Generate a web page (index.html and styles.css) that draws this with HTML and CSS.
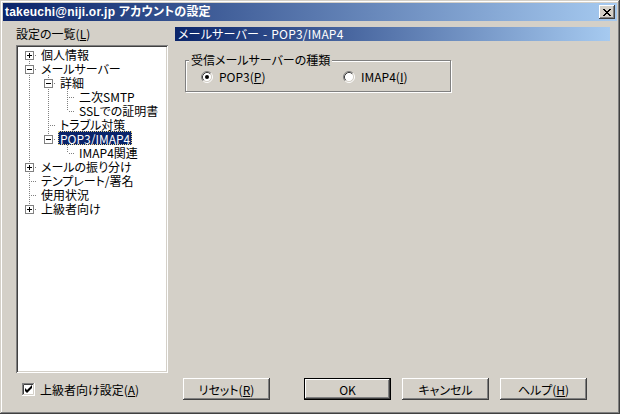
FILE: index.html
```html
<!DOCTYPE html>
<html lang="ja">
<head>
    <meta charset="UTF-8">
    <link rel="stylesheet" href="styles.css">
    <title>アカウントの設定</title>
</head>
<body>
<div class="window">
    <div class="titlebar">
        <span class="title">takeuchi@niji.or.jp アカウントの設定</span>
        <button class="close">
            <svg width="8" height="7" viewBox="0 0 8 7"><path d="M0 0h2v1h1v1h2V1h1V0h2v1H7v1H6v1H5v1h1v1h1v1h1v1H6V6H5V5H3v1H2v1H0V6h1V5h1V4h1V3H2V2H1V1H0z" fill="#000"/></svg>
        </button>
    </div>

    <div class="content">
        <div class="left">
            <div class="list-label">設定の一覧(<u>L</u>)</div>
            <div class="tree">
                <div class="row"><span class="joint first"><i class="exp plus"></i></span><span class="text">個人情報</span></div>
                <div class="row"><span class="joint"><i class="exp"></i></span><span class="text">メールサーバー</span></div>
                <div class="row"><span class="guide line"></span><span class="joint"><i class="exp"></i></span><span class="text">詳細</span></div>
                <div class="row"><span class="guide line"></span><span class="guide line"></span><span class="joint"></span><span class="text">二次SMTP</span></div>
                <div class="row"><span class="guide line"></span><span class="guide line"></span><span class="joint last"></span><span class="text">SSLでの証明書</span></div>
                <div class="row"><span class="guide line"></span><span class="joint"></span><span class="text">トラブル対策</span></div>
                <div class="row"><span class="guide line"></span><span class="joint last"><i class="exp"></i></span><span class="text sel">POP3/IMAP4</span></div>
                <div class="row"><span class="guide line"></span><span class="guide"></span><span class="joint last"></span><span class="text">IMAP4関連</span></div>
                <div class="row"><span class="joint"><i class="exp plus"></i></span><span class="text">メールの振り分け</span></div>
                <div class="row"><span class="joint"></span><span class="text">テンプレート/署名</span></div>
                <div class="row"><span class="joint"></span><span class="text">使用状況</span></div>
                <div class="row"><span class="joint last"><i class="exp plus"></i></span><span class="text">上級者向け</span></div>
            </div>
        </div>

        <div class="right">
            <div class="page-title">メールサーバー - POP3/IMAP4</div>
            <fieldset class="group">
                <legend>受信メールサーバーの種類</legend>
                <div class="radios">
                    <label class="radio">
                        <svg width="12" height="12" viewBox="0 0 12 12">
                            <circle cx="6" cy="6" r="4.5" fill="#fff"/>
                            <path d="M2.11 9.89A5.5 5.5 0 0 1 9.89 2.11" stroke="#808080" fill="none"/>
                            <path d="M9.89 2.11A5.5 5.5 0 0 1 2.11 9.89" stroke="#fff" fill="none"/>
                            <path d="M2.82 9.18A4.5 4.5 0 0 1 9.18 2.82" stroke="#404040" fill="none"/>
                            <path d="M9.18 2.82A4.5 4.5 0 0 1 2.82 9.18" stroke="#d4d0c8" fill="none"/>
                            <circle cx="6" cy="6" r="2" fill="#000"/>
                        </svg>
                        <span>POP3(<u>P</u>)</span>
                    </label>
                    <label class="radio">
                        <svg width="12" height="12" viewBox="0 0 12 12">
                            <circle cx="6" cy="6" r="4.5" fill="#fff"/>
                            <path d="M2.11 9.89A5.5 5.5 0 0 1 9.89 2.11" stroke="#808080" fill="none"/>
                            <path d="M9.89 2.11A5.5 5.5 0 0 1 2.11 9.89" stroke="#fff" fill="none"/>
                            <path d="M2.82 9.18A4.5 4.5 0 0 1 9.18 2.82" stroke="#404040" fill="none"/>
                            <path d="M9.18 2.82A4.5 4.5 0 0 1 2.82 9.18" stroke="#d4d0c8" fill="none"/>
                        </svg>
                        <span>IMAP4(<u>I</u>)</span>
                    </label>
                </div>
            </fieldset>
        </div>

        <label class="check">
            <svg width="13" height="13" viewBox="0 0 13 13">
                <rect x="0" y="0" width="13" height="13" fill="#fff"/>
                <path d="M0 12.5V0.5h12" stroke="#808080" fill="none"/>
                <path d="M0.5 13V0.5" stroke="#808080"/>
                <path d="M1.5 11V1.5h10" stroke="#404040" fill="none"/>
                <path d="M1 11.5h10.5V1" stroke="#d4d0c8" fill="none"/>
                <path d="M0 12.5h12.5V0" stroke="#fff" fill="none"/>
                <path d="M3 5v3l2 2 5-5V2L5 7z" fill="#000"/>
            </svg>
            <span>上級者向け設定(<u>A</u>)</span>
        </label>

        <div class="buttons">
            <button class="btn">リセット(<u>R</u>)</button>
            <button class="btn default">OK</button>
            <button class="btn">キャンセル</button>
            <button class="btn">ヘルプ(<u>H</u>)</button>
        </div>
    </div>
</div>
</body>
</html>
```

FILE: styles.css
```css
body {
    margin: 0;
    font-family: "Noto Sans CJK JP", sans-serif;
    font-size: 12px;
    font-feature-settings: "palt";
    color: #000;
    background-color: #d4d0c8;
}

.window {
    width: 620px;
    height: 414px;
    box-sizing: border-box;
    padding: 3px;
    background-color: #d4d0c8;
    box-shadow: inset -1px -1px #404040, inset 1px 1px #d4d0c8,
                inset -2px -2px #808080, inset 2px 2px #fff;
}

.titlebar {
    height: 18px;
    display: flex;
    align-items: center;
    justify-content: space-between;
    padding: 0 2px;
    background: linear-gradient(to right, #0a246a, #a6caf0);
}

.title {
    color: #fff;
    font-family: "Liberation Sans", "Noto Sans CJK JP", sans-serif;
    font-weight: bold;
    font-size: 12px;
    letter-spacing: 0.2px;
    line-height: 18px;
}

.close {
    width: 16px;
    height: 14px;
    padding: 0;
    border: none;
    display: flex;
    align-items: center;
    justify-content: center;
    background-color: #d4d0c8;
    box-shadow: inset -1px -1px #404040, inset 1px 1px #fff,
                inset -2px -2px #808080, inset 2px 2px #d4d0c8;
}

.content {
    display: grid;
    grid-template-columns: 152px 435px;
    grid-template-rows: 346px 22px;
    column-gap: 7px;
    row-gap: 5px;
    padding: 6px 0 0 13px;
}

.left {
    display: flex;
    flex-direction: column;
}

.list-label {
    height: 12px;
    line-height: 13px;
    margin-bottom: 6px;
}

u {
    text-decoration: underline;
    text-underline-offset: 1px;
}

/* tree view */
.tree {
    flex: 1;
    background-color: #fff;
    padding-top: 2px;
    padding-left: 2px;
    box-shadow: inset 1px 1px #808080, inset -1px -1px #fff,
                inset 2px 2px #404040, inset -2px -2px #d4d0c8;
}

.row {
    display: flex;
    height: 14px;
}

.guide,
.joint {
    position: relative;
    width: 19px;
    flex: none;
}

.guide.line::before,
.joint::before {
    content: "";
    position: absolute;
    left: 11px;
    top: 0;
    bottom: 0;
    width: 1px;
    background: repeating-linear-gradient(to bottom, #808080 0 1px, transparent 1px 2px);
}

.joint.first::before {
    top: 8px;
}

.joint.last::before {
    bottom: 7px;
}

.joint::after {
    content: "";
    position: absolute;
    left: 12px;
    top: 8px;
    width: 7px;
    height: 1px;
    background: repeating-linear-gradient(to right, transparent 0 1px, #808080 1px 2px);
}

.exp {
    position: absolute;
    left: 7px;
    top: 4px;
    width: 7px;
    height: 7px;
    border: 1px solid #808080;
    background-color: #fff;
    z-index: 1;
}

.exp::before {
    content: "";
    position: absolute;
    left: 1px;
    top: 3px;
    width: 5px;
    height: 1px;
    background-color: #000;
}

.exp.plus::after {
    content: "";
    position: absolute;
    left: 3px;
    top: 1px;
    width: 1px;
    height: 5px;
    background-color: #000;
}

.text {
    box-sizing: border-box;
    margin-left: 2px;
    padding: 1px 2px 0;
    line-height: 13px;
    height: 14px;
    white-space: nowrap;
}

.text.sel {
    background-color: #0a246a;
    color: #fff;
    outline: 1px dotted #e8d890;
    outline-offset: -1px;
}

/* right page */
.page-title {
    height: 14px;
    line-height: 14px;
    padding-left: 3px;
    color: #fff;
    letter-spacing: 0.2px;
    word-spacing: 1px;
    background: linear-gradient(to right, #0a246a, #a6caf0);
}

.group {
    width: 266px;
    box-sizing: border-box;
    margin: 12px 0 0 10px;
    padding: 3px 0 7px 15px;
    border: 1px solid #808080;
    box-shadow: inset 1px 1px #fff, 1px 1px #fff;
}

.group legend {
    padding: 0 2px;
    margin-left: -12px;
    line-height: 14px;
    background-color: #d4d0c8;
}

.radios {
    display: flex;
}

.radio {
    display: flex;
    align-items: center;
    gap: 6px;
    line-height: 14px;
}

.radio:first-child {
    width: 142px;
}

/* bottom row */
.check {
    display: flex;
    align-items: center;
    gap: 5px;
    padding-left: 6px;
}

.buttons {
    display: flex;
    padding-left: 8px;
}

.btn {
    width: 87px;
    height: 22px;
    padding: 0;
    border: none;
    margin-right: 11px;
    font-family: inherit;
    font-size: 12px;
    font-feature-settings: "palt";
    color: #000;
    background-color: #d4d0c8;
    box-shadow: inset -1px -1px #404040, inset 1px 1px #fff,
                inset -2px -2px #808080, inset 2px 2px #d4d0c8;
}

.btn:first-child {
    margin-right: 34px;
}

.btn.default {
    box-shadow: inset 0 0 0 1px #000, inset -2px -2px #404040, inset 2px 2px #fff,
                inset -3px -3px #808080;
}
```
